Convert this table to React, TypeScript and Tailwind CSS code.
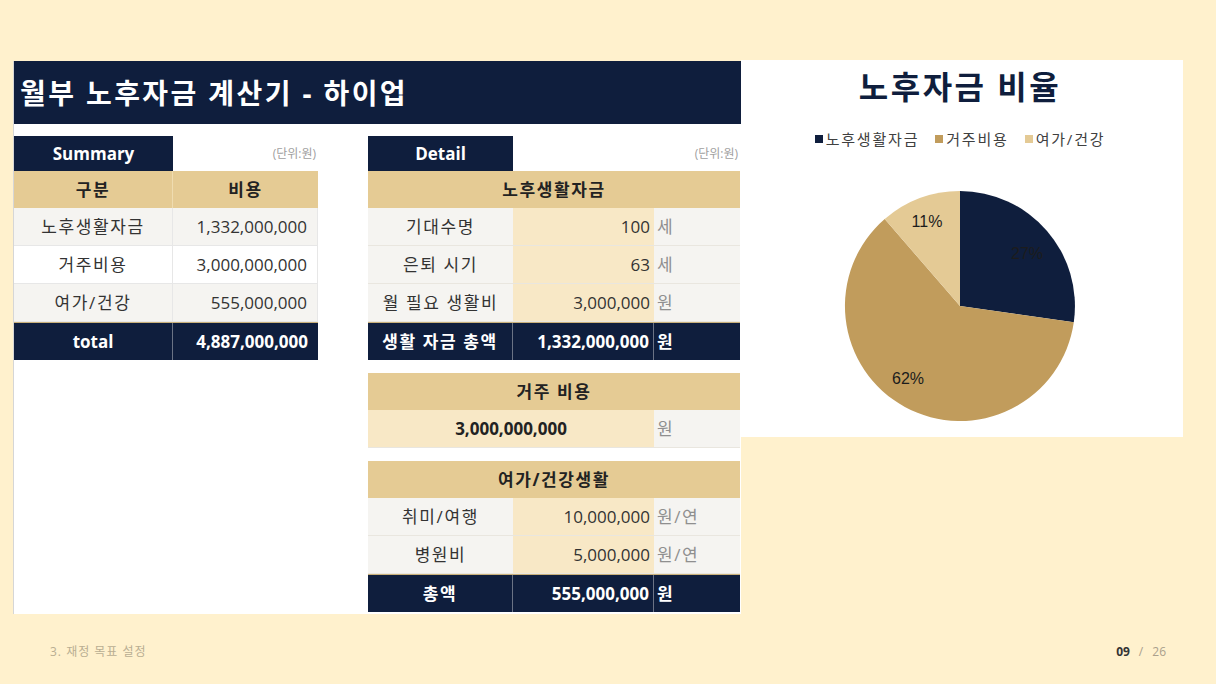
import React from "react";

const NAVY = "bg-[#0f1e3d]";
const FONT = { fontFamily: '"Open Sans", "Noto Sans CJK KR", sans-serif' };
const KR = "tracking-[1.6px]";

function SummaryTable() {
  const rows = [
    ["노후생활자금", "1,332,000,000", "bg-[#f5f4f1]"],
    ["거주비용", "3,000,000,000", "bg-white"],
    ["여가/건강", "555,000,000", "bg-[#f5f4f1]"],
  ];
  return (
    <div className="w-[304px] flex flex-col">
      <div className="flex h-[35px]">
        <div className={`w-[159px] ${NAVY} flex items-center justify-center text-white font-bold text-[17px]`}>Summary</div>
        <div className="flex-1 flex items-center justify-end pr-[2px] text-[12px] text-[#a0a0a0]">(단위:원)</div>
      </div>
      <div className={`flex h-[37px] bg-[#e5cb94] text-[17px] font-bold text-[#222] ${KR}`}>
        <div className="w-[159px] flex items-center justify-center border-r border-[#efdcb0]">구분</div>
        <div className="flex-1 flex items-center justify-center">비용</div>
      </div>
      {rows.map(([a, b, bg]) => (
        <div key={a} className={`flex h-[38px] ${bg} text-[17px] text-[#333] border-b border-[#e7e7e7]`}>
          <div className={`w-[159px] flex items-center justify-center border-r border-[#e7e7e7] ${KR}`}>{a}</div>
          <div className="flex-1 flex items-center justify-end pr-[10px] border-r border-[#e7e7e7]">{b}</div>
        </div>
      ))}
      <div className={`flex h-[38px] ${NAVY} text-[17px] font-bold text-white border-t border-[#c9b07a]`}>
        <div className="w-[159px] flex items-center justify-center border-r border-[#6b7385]">total</div>
        <div className="flex-1 flex items-center justify-end pr-[10px]">4,887,000,000</div>
      </div>
    </div>
  );
}

function SectionHeader({ title }: { title: string }) {
  return (
    <div className={`flex h-[37px] bg-[#e5cb94] items-center justify-center text-[17px] font-bold text-[#222] ${KR}`}>{title}</div>
  );
}

function DataRow({ a, b, c }: { a: string; b: string; c: string }) {
  return (
    <div className="flex h-[38px] text-[17px] text-[#333] border-b border-[#e9e6df]">
      <div className={`w-[145px] bg-[#f5f4f1] flex items-center justify-center ${KR}`}>{a}</div>
      <div className="w-[141px] bg-[#f8e8c6] flex items-center justify-end pr-[4px]">{b}</div>
      <div className={`flex-1 bg-[#f5f4f1] flex items-center pl-[3px] text-[#8f8f8f] ${KR}`}>{c}</div>
    </div>
  );
}

function TotalRow({ a, b }: { a: string; b: string }) {
  return (
    <div className={`flex h-[38px] ${NAVY} text-[17px] font-bold text-white border-t border-[#c9b07a]`}>
      <div className={`w-[145px] flex items-center justify-center border-r border-[#6b7385] ${KR}`}>{a}</div>
      <div className="w-[141px] flex items-center justify-end pr-[4px] border-r border-[#6b7385]">{b}</div>
      <div className="flex-1 flex items-center pl-[3px]">원</div>
    </div>
  );
}

function DetailTable() {
  return (
    <div className="w-[372px] flex flex-col">
      <div className="flex h-[35px]">
        <div className={`w-[145px] ${NAVY} flex items-center justify-center text-white font-bold text-[17px]`}>Detail</div>
        <div className="flex-1 flex items-center justify-end pr-[2px] text-[12px] text-[#a0a0a0]">(단위:원)</div>
      </div>
      <SectionHeader title="노후생활자금" />
      <DataRow a="기대수명" b="100" c="세" />
      <DataRow a="은퇴 시기" b="63" c="세" />
      <DataRow a="월 필요 생활비" b="3,000,000" c="원" />
      <TotalRow a="생활 자금 총액" b="1,332,000,000" />

      <div className="mt-[13px]">
        <SectionHeader title="거주 비용" />
        <div className="flex h-[38px] text-[17px] border-b border-[#e9e6df]">
          <div className="w-[286px] bg-[#f8e8c6] flex items-center justify-center font-bold text-[#222]">3,000,000,000</div>
          <div className="flex-1 bg-[#f5f4f1] flex items-center pl-[3px] text-[#8f8f8f]">원</div>
        </div>
      </div>

      <div className="mt-[13px]">
        <SectionHeader title="여가/건강생활" />
        <DataRow a="취미/여행" b="10,000,000" c="원/연" />
        <DataRow a="병원비" b="5,000,000" c="원/연" />
        <TotalRow a="총액" b="555,000,000" />
      </div>
    </div>
  );
}

function Pie() {
  return (
    <svg width="240" height="240" viewBox="0 0 240 240" className="ml-[-4px]">
      <path d="M120 120 L120 5 A115 115 0 0 1 233.8 136.2 Z" fill="#0f1e3d" />
      <path d="M120 120 L233.8 136.2 A115 115 0 1 1 44.7 33.05 Z" fill="#c19c5c" />
      <path d="M120 120 L44.7 33.05 A115 115 0 0 1 120 5 Z" fill="#e4ca95" />
      <g fontFamily='"Liberation Sans", Arial, sans-serif' fontSize="16" fill="#1c1c1c" textAnchor="middle" dominantBaseline="central">
        <text x="87" y="35">11%</text>
        <text x="187" y="67">27%</text>
        <text x="68" y="192">62%</text>
      </g>
    </svg>
  );
}

function Chart() {
  const items: [string, string][] = [
    ["bg-[#0f1e3d]", "노후생활자금"],
    ["bg-[#c19c5c]", "거주비용"],
    ["bg-[#e4ca95]", "여가/건강"],
  ];
  return (
    <div className="w-[442px] h-[377px] bg-white flex flex-col items-center">
      <div className="mt-[7px] h-[40px] leading-[40px] text-[32px] font-bold text-[#0f1e3d] ml-[-4px] tracking-[2.5px]">노후자금 비율</div>
      <div className="mt-[22px] h-[20px] flex items-center gap-[16px] text-[15px] text-[#404040] ml-[-4px] tracking-[1.8px]">
        {items.map(([c, t]) => (
          <div key={t} className="flex items-center gap-[3px]">
            <span className={`inline-block w-[8px] h-[8px] ${c}`} />
            <span>{t}</span>
          </div>
        ))}
      </div>
      <div className="mt-[37px]">
        <Pie />
      </div>
    </div>
  );
}

export default function App() {
  return (
    <div className="w-[1216px] h-[684px] bg-[#fff1cd] flex flex-col overflow-hidden" style={FONT}>
      <div className="flex pt-[60px] pl-[13px]">
        <div className="w-[728px] h-[553px] mt-[1px] bg-white border-l border-[#d6d6d6] flex flex-col">
          <div className={`h-[63px] ${NAVY} flex items-center pl-[6px] text-white font-bold text-[28px] tracking-[2.4px]`}>
            월부 노후자금 계산기 - 하이업
          </div>
          <div className="flex pt-[12px] gap-[50px]">
            <SummaryTable />
            <DetailTable />
          </div>
        </div>
        <Chart />
      </div>
      <div className="flex justify-between items-center h-[20px] mt-[28px] pl-[50px] pr-[50px]">
        <div className="text-[12px] text-[#b9ae92] tracking-[1px]">3. 재정 목표 설정</div>
        <div className="text-[12px] flex gap-[9px]">
          <span className="font-bold text-[#333]">09</span>
          <span className="text-[#aaa08c]">/</span>
          <span className="text-[#aaa08c]">26</span>
        </div>
      </div>
    </div>
  );
}
